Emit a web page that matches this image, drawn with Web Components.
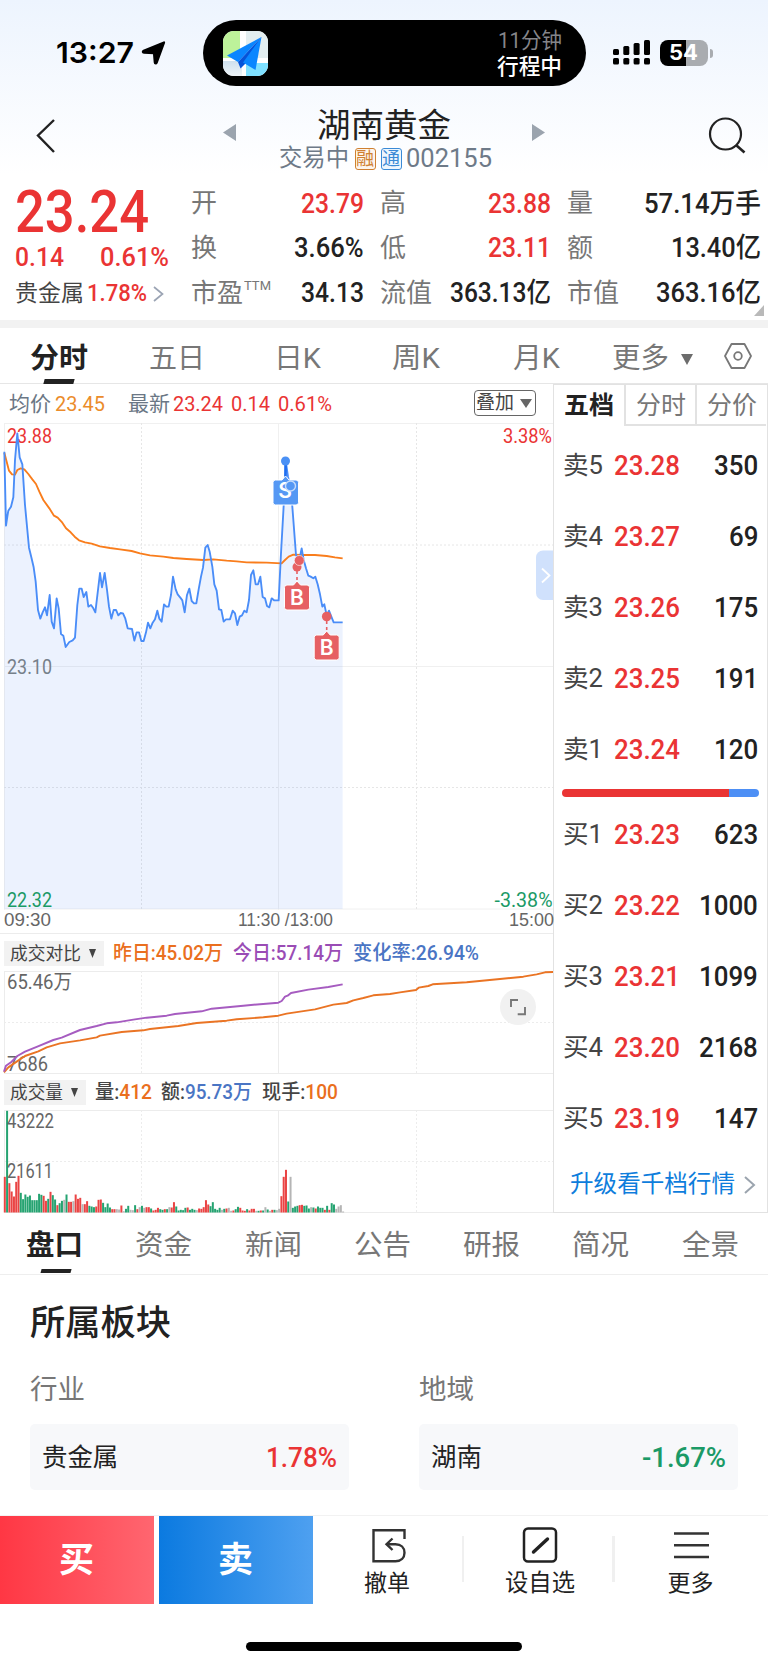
<!DOCTYPE html>
<html lang="zh-CN">
<head>
<meta charset="UTF-8">
<meta name="viewport" content="width=device-width, initial-scale=1.0">
<title>湖南黄金 002155</title>
<style>
  html, body { margin: 0; padding: 0; background: #fff; }
  body {
    width: 768px;
    height: 1665px;
    overflow: hidden;
    font-family: Roboto, "Noto Sans CJK SC", sans-serif;
    color: #222;
    --red: #ea3434;
    --green: #1b9a66;
    --blue: #4d8ff5;
    --line: #ececec;
  }
</style>
</head>
<body>
<stock-app></stock-app>

<script>
class FitText extends HTMLElement {
  constructor() {
    super();
    this.attachShadow({ mode: 'open' });
  }

  connectedCallback() {
    const w = parseFloat(this.getAttribute('w'));
    const s = this.getAttribute('s');
    this.shadowRoot.innerHTML = `
      <style>
        :host {
          display: block;
          flex: none;
          width: ${w}px;
          font-size: ${s}px;
          line-height: 1.2;
          white-space: nowrap;
        }
        span { display: inline-block; transform-origin: 0 50%; vertical-align: top; }
      </style>
      <span><slot></slot></span>
    `;
    const span = this.shadowRoot.querySelector('span');
    const natural = span.getBoundingClientRect().width;
    if (natural) span.style.transform = `scaleX(${w / natural})`;
  }
}

class StatusBar extends HTMLElement {
  constructor() {
    super();
    this.attachShadow({ mode: 'open' });
  }

  connectedCallback() {
    this.shadowRoot.innerHTML = `
      <style>
        :host { display: flex; align-items: center; height: 106px; color: #000; }
        .time { font-family: Inter, sans-serif; font-weight: 600; margin-left: 56px; }
        .arrow { margin-left: 7px; }
        .island {
          display: flex;
          align-items: center;
          width: 383px;
          height: 66px;
          margin-left: 36.500px;
          border-radius: 33px;
          background: #000;
        }
        .island svg { margin-left: 20px; }
        .trip { margin: 1px 24px 0 auto; display: flex; flex-direction: column; align-items: flex-end; }
        .trip .eta { color: #85858a; }
        .trip .state { color: #fff; font-weight: 500; }
        .signal { margin-left: 27px; }
        .battery {
          display: flex;
          align-items: center;
          justify-content: center;
          width: 48px;
          height: 26px;
          margin-left: 10px;
          border-radius: 8px;
          background: linear-gradient(90deg, #000 54%, #a9acb0 54%);
          color: #fff;
          font-family: Inter, sans-serif;
          font-weight: 700;
        }
        .nub { width: 3px; height: 9px; margin-left: 2px; border-radius: 0 4px 4px 0; background: #a9acb0; }
      </style>
      <fit-text class="time" w="78" s="29">13:27</fit-text>
      <svg class="arrow" width="25" height="24" viewBox="0 0 25 24">
        <path d="M23 1.500 15.700 21.500c-.5 1.300-1.800 1.300-1.900 0L13 12.200 3 11.700c-1.500 0-1.500-1.300-.3-1.900z" fill="#000" stroke="#000" stroke-width="2.200" stroke-linejoin="round"/>
      </svg>
      <div class="island">
        <svg width="45" height="45" viewBox="0 0 45 45">
          <defs>
            <clipPath id="c"><rect width="45" height="45" rx="11"/></clipPath>
            <linearGradient id="g" x1="0" y1="0" x2="0" y2="1">
              <stop offset="0" stop-color="#cfe0ee"/><stop offset="1" stop-color="#eef4f8"/>
            </linearGradient>
          </defs>
          <g clip-path="url(#c)">
            <rect width="45" height="45" fill="#fff"/>
            <rect width="17" height="27" fill="#bdf29a"/>
            <rect x="23" width="22" height="27" fill="#e3eef0"/>
            <rect y="30" width="19" height="15" fill="url(#g)"/>
            <rect x="23" y="32" width="22" height="13" fill="#7fe0ff"/>
            <path d="M38.500 6 4 24.500l11 6.500z" fill="#0a86ff"/>
            <path d="M38.500 6 15 31l2.500 6.500L22 33z" fill="#0553d8"/>
            <path d="M38.500 6 20 31.500 32.500 39z" fill="#0a86ff"/>
          </g>
        </svg>
        <div class="trip">
          <fit-text class="eta" w="64" s="21.500">11分钟</fit-text>
          <fit-text class="state" w="65" s="21.500">行程中</fit-text>
        </div>
      </div>
      <svg class="signal" width="37" height="26" viewBox="0 0 37 26">
        <g fill="#000">
          <rect y="9" width="6" height="6" rx="1.500"/><rect x="10.300" y="6" width="6" height="9" rx="1.500"/>
          <rect x="20.600" y="3" width="6" height="12" rx="1.500"/><rect x="31" width="6" height="15" rx="1.500"/>
          <rect y="18" width="6" height="6.500" rx="1.500"/><rect x="10.300" y="18" width="6" height="6.500" rx="1.500"/>
          <rect x="20.600" y="18" width="6" height="6.500" rx="1.500"/><rect x="31" y="18" width="6" height="6.500" rx="1.500"/>
        </g>
      </svg>
      <div class="battery"><fit-text w="29" s="21">54</fit-text></div>
      <div class="nub"></div>
    `;
  }
}

class StockNav extends HTMLElement {
  constructor() {
    super();
    this.attachShadow({ mode: 'open' });
  }

  connectedCallback() {
    this.shadowRoot.innerHTML = `
      <style>
        :host { display: flex; align-items: flex-start; height: 74px; }
        .back { margin: 12px 0 0 35px; }
        .prev { margin: 18px 0 0 167px; }
        .title { width: 216px; margin: 0 40px; display: flex; flex-direction: column; align-items: center; }
        .name { margin-top: -.5px; }
        .sub { display: flex; align-items: center; height: 24px; margin-top: 1.500px; margin-left: 2px; color: #6e7a88; }
        .tag { width: 19px; height: 20px; border: 1.500px solid; border-radius: 3px; display: flex; align-items: center; justify-content: center; }
        .rong { color: #cf8031; background: #fdf5ec; margin-left: 6px; }
        .tong { color: #3a8ad6; background: #eef6fd; margin: 0 4px 0 5px; }
        .next { margin-top: 18px; }
        .search { margin: 11px 0 0 163px; }
      </style>
      <svg class="back" width="21" height="36" viewBox="0 0 21 36"><path d="M19 2 3 17.500 19 34" fill="none" stroke="#222" stroke-width="2.400"/></svg>
      <svg class="prev" width="13" height="17"><path d="M13 0v17L0 8.500z" fill="#9ba4ae"/></svg>
      <div class="title">
        <fit-text class="name" w="134" s="33.500">湖南黄金</fit-text>
        <div class="sub">
          <fit-text w="70" s="23.300">交易中</fit-text>
          <span class="tag rong"><fit-text w="18" s="18">融</fit-text></span>
          <span class="tag tong"><fit-text w="18" s="18">通</fit-text></span>
          <fit-text w="86" s="25">002155</fit-text>
        </div>
      </div>
      <svg class="next" width="13" height="17"><path d="M0 0v17L13 8.500z" fill="#9ba4ae"/></svg>
      <svg class="search" width="38" height="38" viewBox="0 0 38 38">
        <circle cx="17.500" cy="17" r="15.500" fill="none" stroke="#222" stroke-width="2.200"/>
        <path d="m28 28 8.500 7.500" stroke="#222" stroke-width="2.600"/>
      </svg>
    `;
  }
}

class QuotePanel extends HTMLElement {
  constructor() {
    super();
    this.attachShadow({ mode: 'open' });
  }

  connectedCallback() {
    // label, label width, value, value width, colour class
    const columns = [
      [['开', 26, '23.79', 63, 'up'], ['换', 26, '3.66%', 69.5, ''], ['市盈', 52, '34.13', 63, '']],
      [['高', 26, '23.88', 63, 'up'], ['低', 26, '23.11', 63, 'up'], ['流值', 52, '363.13亿', 101, '']],
      [['量', 26, '57.14万手', 117, ''], ['额', 26, '13.40亿', 90, ''], ['市值', 52, '363.16亿', 105, '']]
    ];
    const cell = ([label, lw, value, vw, cls]) => `
      <div class="cell">
        <fit-text class="label" w="${lw}" s="26">${label}</fit-text>
        ${label === '市盈' ? '<fit-text class="ttm" w="27" s="13">TTM</fit-text>' : ''}
        <fit-text class="value ${cls}" w="${vw}" s="27">${value}</fit-text>
      </div>`;
    this.shadowRoot.innerHTML = `
      <style>
        :host { display: flex; position: relative; height: 140px; border-bottom: 8.500px solid #f2f2f2; }
        .up { color: var(--red); }
        .price { width: 191px; box-sizing: border-box; padding: 1px 0 0 15px; color: var(--red); }
        .big { font-weight: 500; line-height: 62px; }
        .row { display: flex; align-items: center; height: 31px; }
        .diff { font-weight: 500; margin-top: -2px; height: 34px; }
        .sector { color: #444; margin-top: 1px; height: 36px; }
        .col { display: flex; flex-direction: column; padding-top: 1.500px; }
        .cell { display: flex; align-items: center; height: 44.700px; }
        .label { color: #777; }
        .ttm { color: #777; margin: -15px 0 0 1px; }
        .value { margin-left: auto; font-weight: 500; }
        .c0 { width: 172.500px; } .c1 { width: 171.500px; margin-left: 16px; } .c2 { width: 194px; margin-left: 15.500px; }
        .corner { position: absolute; right: 4px; bottom: 4px; }
      </style>
      <div class="price">
        <fit-text class="big" w="134" s="59">23.24</fit-text>
        <div class="row diff"><fit-text w="49" s="26">0.14</fit-text><fit-text style="margin-left:36px" w="69" s="26">0.61%</fit-text></div>
        <div class="row sector">
          <fit-text w="69" s="23">贵金属</fit-text>
          <fit-text class="up" style="font-weight:500;margin-left:3px" w="60" s="23">1.78%</fit-text>
          <svg style="margin-left:6px" width="11" height="16"><path d="m1 1 8.500 7L1 15" fill="none" stroke="#9ba4b4" stroke-width="1.700"/></svg>
        </div>
      </div>
      ${columns.map((col, i) => `<div class="col c${i}">${col.map(cell).join('')}</div>`).join('')}
      <svg class="corner" width="10" height="11"><path d="M10 0v11H0z" fill="#b9b9b9"/></svg>
    `;
  }
}

class PeriodTabs extends HTMLElement {
  constructor() {
    super();
    this.attachShadow({ mode: 'open' });
  }

  connectedCallback() {
    this.shadowRoot.innerHTML = `
      <style>
        :host { display: flex; align-items: flex-start; height: 54.500px; border-bottom: 1px solid #e6e6e6; color: #777; }
        fit-text { margin-top: 13.500px; }
        .on { display: flex; flex-direction: column; align-items: center; margin-left: 30px; color: #222; font-weight: 700; }
        .on i { width: 30px; height: 5px; margin-top: 3px; background: #222; transform: skewX(-15deg); }
      </style>
      <div class="on"><fit-text w="58" s="28.500">分时</fit-text><i></i></div>
      <fit-text style="margin-left:61px" w="56" s="28">五日</fit-text>
      <fit-text style="margin-left:69px" w="47" s="28">日K</fit-text>
      <fit-text style="margin-left:71px" w="48" s="28">周K</fit-text>
      <fit-text style="margin-left:73px" w="47" s="28">月K</fit-text>
      <fit-text style="margin-left:52px" w="57" s="28.500">更多</fit-text>
      <svg style="margin:26px 0 0 12px" width="12" height="11"><path d="M0 0h12L6 11z" fill="#6c6c6c"/></svg>
      <svg style="margin:14px 0 0 30px" width="30" height="28" viewBox="0 0 30 28">
        <path d="M8.500 2h13l6.500 12-6.500 12h-13L2 14z" fill="none" stroke="#777" stroke-width="1.800" stroke-linejoin="round"/>
        <circle cx="15" cy="14" r="3.800" fill="none" stroke="#777" stroke-width="1.800"/>
      </svg>
    `;
  }
}

class PriceChart extends HTMLElement {
  constructor() {
    super();
    this.attachShadow({ mode: 'open' });
  }

  connectedCallback() {
    // points are in thirds of a pixel, origin at y = 380
    const price = '13,215 18,437 22,410 25,392 33,380 40,352 45,240 52,160 59,232 67,253 75,375 82,450 87,503 94,532 101,562 107,605 114,690 121,716 128,697 135,682 141,706 149,645 155,725 162,745 170,655 176,685 183,762 190,767 197,801 208,786 218,781 225,773 232,675 238,626 245,626 251,651 259,636 265,680 273,675 280,685 286,697 300,579 306,622 314,579 321,630 327,680 334,716 341,690 348,690 355,706 362,699 369,700 376,716 383,745 396,747 403,782 410,757 417,757 424,783 431,783 438,757 444,728 451,745 458,728 465,718 472,692 478,716 485,725 492,673 499,680 506,680 513,645 519,590 527,628 533,643 541,653 547,661 554,697 561,645 568,626 575,663 582,670 589,670 596,628 603,590 609,563 616,503 623,495 629,515 637,560 643,613 650,632 657,688 664,690 671,725 678,718 690,718 698,692 705,700 712,735 719,710 726,706 733,692 740,697 747,660 753,585 760,571 767,613 774,613 781,590 788,651 795,655 801,678 808,682 815,655 822,661 836,661 843,520 852,360 857,242 864,290 870,317 877,380 888,525 898,540 905,505 911,540 918,565 925,587 932,590 940,595 946,590 953,613 960,643 967,680 973,673 980,706 987,692 994,710 1001,727 1028,727';
    const average = '13,218 20,245 27,272 36,283 45,284 52,270 62,265 73,268 85,282 97,298 108,312 118,335 130,360 148,385 162,407 173,413 187,428 198,445 212,457 224,470 237,481 255,487 275,491 300,499 330,504 360,508 395,513 420,520 450,526 490,530 520,534 560,537 610,540 640,538 680,542 710,544 740,547 800,548 845,550 855,540 866,530 880,524 905,525 945,525 980,528 1005,532 1028,535';
    this.shadowRoot.innerHTML = `
      <style>
        :host { display: block; height: 487px; }
        svg { display: block; overflow: visible; }
        text { font-size: 20px; fill: #76808a; }
        .up { fill: var(--red); }
        .down { fill: var(--green); }
        .mark { font-family: Inter, sans-serif; font-size: 21px; font-weight: 600; fill: #fff; text-anchor: middle; }
      </style>
      <svg width="554" height="487" viewBox="0 423 554 487">
        <g stroke="#f0f0f0" fill="none">
          <path d="M4 423.500h549M4 666.500h549M4 909h549M4.500 423v487M278.500 423v487"/>
          <path d="M4 545h549M4 787.500h549M141.500 423v487M416.500 423v487" stroke="#e6e6e6" stroke-dasharray="2 2"/>
        </g>
        <text class="up" x="7" y="443" textLength="45" lengthAdjust="spacingAndGlyphs">23.88</text>
        <text class="up" x="503" y="443" textLength="49" lengthAdjust="spacingAndGlyphs">3.38%</text>
        <g transform="translate(0 380) scale(.33333)">
          <polygon points="13,1587 ${price} 1028,1587" fill="#4a86f5" fill-opacity=".105"/>
          <polyline points="${average}" fill="none" stroke="#f97d1c" stroke-width="5.600" stroke-linejoin="round"/>
          <polyline points="${price}" fill="none" stroke="#4a8df8" stroke-width="5.600" stroke-linejoin="round"/>
        </g>
        <text x="7" y="674" textLength="45" lengthAdjust="spacingAndGlyphs">23.10</text>
        <text class="down" x="7" y="907" textLength="45" lengthAdjust="spacingAndGlyphs">22.32</text>
        <text class="down" x="494.500" y="907" textLength="58" lengthAdjust="spacingAndGlyphs">-3.38%</text>

        <path d="M285.600 464v16" stroke="#1f6ef0" stroke-width="2.500"/>
        <circle cx="285.500" cy="461" r="4.500" fill="#4a90f5"/>
        <path d="M282 480l3.500-4 3.500 4h7a2.500 2.500 0 0 1 2.500 2.500v20a2.500 2.500 0 0 1-2.500 2.500h-20.500a2.500 2.500 0 0 1-2.500-2.500v-20a2.500 2.500 0 0 1 2.500-2.500z" fill="#5598f4" stroke="#fff" stroke-width="1"/>
        <text class="mark" x="285" y="498">S</text>
        <circle cx="290.500" cy="486" r="5" fill="#5598f4" stroke="#c5dcfb" stroke-width="1.400"/>

        <g fill="#e66063">
          <circle cx="297" cy="567" r="4.500"/>
          <circle cx="299.300" cy="560.500" r="5" stroke="#fff" stroke-width=".6"/>
          <path d="M297 571v13" stroke="#e66063" stroke-width="1.600" stroke-dasharray="3 3"/>
          <path d="M293.500 585l3.500-4 3.500 4h6.500a2.500 2.500 0 0 1 2.500 2.500v20a2.500 2.500 0 0 1-2.500 2.500h-20a2.500 2.500 0 0 1-2.500-2.500v-20a2.500 2.500 0 0 1 2.500-2.500z" stroke="#fff" stroke-width="1"/>
          <circle cx="326.700" cy="616.500" r="4.800"/>
          <path d="M326.700 621v13" stroke="#e66063" stroke-width="1.600" stroke-dasharray="3 3"/>
          <path d="M323.200 635l3.500-4 3.500 4h6.500a2.500 2.500 0 0 1 2.500 2.500v20a2.500 2.500 0 0 1-2.500 2.500h-20a2.500 2.500 0 0 1-2.500-2.500v-20a2.500 2.500 0 0 1 2.500-2.500z" stroke="#fff" stroke-width="1"/>
        </g>
        <text class="mark" x="297" y="604.500">B</text>
        <text class="mark" x="326.700" y="654.500">B</text>

        <path d="M554 550.500h-11a7 7 0 0 0-7 7v35.500a7 7 0 0 0 7 7h11z" fill="#d0e1fc"/>
        <path d="m542 568.500 7.500 7-7.500 7" fill="none" stroke="#fff" stroke-width="1.800"/>
      </svg>
    `;
  }
}

class CompareChart extends HTMLElement {
  constructor() {
    super();
    this.attachShadow({ mode: 'open' });
  }

  connectedCallback() {
    // thirds of a pixel, origin at y = 880
    const today = '12,575 18,557 35,545 52,528 75,515 112,500 160,480 185,473 240,450 290,438 320,430 350,427 400,419 440,413 500,407 525,402 605,394 635,386 730,377 835,368 845,363 855,350 863,347 873,339 925,329 985,321 1028,313';
    const yesterday = '12,577 25,562 50,545 75,528 115,514 140,502 180,490 240,481 290,472 300,467 365,456 430,451 450,447 535,438 590,429 680,422 710,418 790,412 835,407 860,401 945,388 1000,374 1040,369 1060,361 1090,354 1120,346 1170,342 1200,337 1248,330 1256,323 1285,318 1298,313 1400,307 1500,297 1570,290 1610,283 1635,277 1660,276';
    this.shadowRoot.innerHTML = `
      <style>
        :host { display: block; height: 103px; }
        svg { display: block; overflow: visible; }
        text { font-size: 20px; fill: #666; }
      </style>
      <svg width="554" height="103" viewBox="0 971 554 103">
        <g stroke="#ececec" fill="none">
          <path d="M4 971.500h549M4 1073.500h549M4.500 971v103M278.500 971v103"/>
          <path d="M4 1022.500h549M141.500 971v103M416.500 971v103" stroke-dasharray="2 2"/>
        </g>
        <text x="7" y="989" textLength="65" lengthAdjust="spacingAndGlyphs">65.46万</text>
        <text x="7" y="1071" textLength="41" lengthAdjust="spacingAndGlyphs">7686</text>
        <g transform="translate(0 880) scale(.33333)" fill="none" stroke-width="5.800" stroke-linejoin="round">
          <polyline points="${yesterday}" stroke="#ea7424"/>
          <polyline points="${today}" stroke="#a65cc0"/>
        </g>
        <circle cx="518" cy="1007" r="18" fill="#f1f1f1"/>
        <path d="M511 1007v-7h7M525 1007v7.300h-7.300" fill="none" stroke="#777" stroke-width="1.900"/>
      </svg>
    `;
  }
}

class VolumeChart extends HTMLElement {
  constructor() {
    super();
    this.attachShadow({ mode: 'open' });
  }

  connectedCallback() {
    // r = up, g = down, x = flat, followed by the bar height
    const bars = 'r107 g305 r88 r63 r48 r92 r110 g59 g40 g54 g47 g51 g37 g37 g37 g56 g53 r50 r35 g41 r62 g52 g39 r22 g28 g35 x38 g54 r32 r32 x34 r54 r41 r44 x25 r25 r34 g20 g18 g16 r18 r38 r39 g29 g16 g27 g15 r10 r10 x10 x9 r21 x4 g11 g20 x8 x7 g22 r10 x16 g20 x14 r16 r16 g12 r6 r8 r14 g10 g8 r10 g10 x16 r15 r31 g18 g6 g8 g7 g14 r15 g8 g11 g8 x7 r12 r11 r16 r37 r24 g19 g31 g11 g8 g14 x8 g11 r12 x14 x5 r6 g10 g17 r14 r6 r5 g10 r6 r11 r11 x5 g5 r6 g6 x16 g9 x5 r8 g8 x7 x11 r49 r107 r128 g33 x107 g14 g18 g20 r22 r23 g20 g21 g12 x16 g15 r12 g18 g14 g14 r8 g20 r8 g28 g24 x11 x18 x22 x3'.split(' ');
    const colors = { r: '#ea4444', g: '#25a371', x: '#b5b5b5' };
    const rects = bars.map((b, i) => {
      const h = b.slice(1) / 3;
      return `<rect x="${(3.8 + i * 2.286).toFixed(2)}" y="${(1212.5 - h).toFixed(2)}" width="2" height="${h.toFixed(2)}" fill="${colors[b[0]]}"/>`;
    }).join('');
    this.shadowRoot.innerHTML = `
      <style>
        :host { display: block; height: 103px; }
        svg { display: block; overflow: visible; }
        text { font-size: 19.500px; fill: #666; }
      </style>
      <svg width="554" height="103" viewBox="0 1110 554 103">
        <g stroke="#ececec" fill="none">
          <path d="M4 1110.500h549M4 1212.500h549M4.500 1110v103M278.500 1110v103"/>
          <path d="M4 1161.500h549M141.500 1110v103M416.500 1110v103" stroke-dasharray="2 2"/>
        </g>
        ${rects}
        <text x="7" y="1127.500" textLength="47" lengthAdjust="spacingAndGlyphs">43222</text>
        <text x="7" y="1177.500" textLength="46" lengthAdjust="spacingAndGlyphs">21611</text>
      </svg>
    `;
  }
}

class ChartPanel extends HTMLElement {
  constructor() {
    super();
    this.attachShadow({ mode: 'open' });
  }

  connectedCallback() {
    this.shadowRoot.innerHTML = `
      <style>
        :host { display: block; width: 553px; }
        .bar { display: flex; align-items: center; box-sizing: border-box; }
        .legend { height: 39px; padding-top: 3px; color: var(--red); }
        .grey { color: #6b7785; }
        .overlay {
          display: flex;
          align-items: center;
          width: 60px;
          height: 24px;
          margin: -3px 0 0 141.500px;
          border: 1.500px solid #666;
          border-radius: 4px;
          color: #444;
        }
        .times { height: 23px; padding: 0 0 1px 4px; color: #666; font-family: "Liberation Sans", sans-serif; }
        .compare { height: 38px; padding-top: 2px; border-top: 1px solid #ececec; font-weight: 500; }
        .volume { height: 36px; padding-top: 1px; font-weight: 500; color: #444; }
        .pill {
          display: flex;
          align-items: center;
          justify-content: space-between;
          box-sizing: border-box;
          height: 25px;
          margin-left: 4px;
          padding: 1px 8px 0 6px;
          background: #f2f2f2;
          color: #444;
          font-weight: 400;
        }
        .orange { color: #ea6f1e; } .violet { color: #9a4cb5; } .blue { color: #4a75c4; }
      </style>
      <div class="bar legend">
        <fit-text class="grey" style="margin-left:9px" w="42" s="21">均价</fit-text>
        <fit-text style="margin-left:4px;color:#eb8c2b" w="50" s="20.500">23.45</fit-text>
        <fit-text class="grey" style="margin-left:23px" w="42" s="21">最新</fit-text>
        <fit-text style="margin-left:3px" w="50" s="20.500">23.24</fit-text>
        <fit-text style="margin-left:8px" w="39" s="20.500">0.14</fit-text>
        <fit-text style="margin-left:8px" w="54" s="20.500">0.61%</fit-text>
        <div class="overlay">
          <fit-text style="margin-left:1px;padding-top:1px" w="38" s="19">叠加</fit-text>
          <svg style="margin-left:6px" width="12" height="9"><path d="M0 0h12L6 9z" fill="#666"/></svg>
        </div>
      </div>
      <price-chart></price-chart>
      <div class="bar times">
        <fit-text w="47" s="19">09:30</fit-text>
        <fit-text style="margin-left:187px" w="95" s="19">11:30 /13:00</fit-text>
        <fit-text style="margin-left:176px" w="45" s="19">15:00</fit-text>
      </div>
      <div class="bar compare">
        <div class="pill" style="width:100px"><fit-text w="71" s="17.800">成交对比</fit-text><svg width="7" height="9"><path d="M0 0h7L3.500 9z" fill="#444"/></svg></div>
        <fit-text class="orange" style="margin-left:9px" w="110" s="20">昨日:45.02万</fit-text>
        <fit-text class="violet" style="margin-left:10px" w="110" s="20">今日:57.14万</fit-text>
        <fit-text class="blue" style="margin-left:10px" w="126" s="20">变化率:26.94%</fit-text>
      </div>
      <compare-chart></compare-chart>
      <div class="bar volume">
        <div class="pill" style="width:82px"><fit-text w="53" s="17.800">成交量</fit-text><svg width="7" height="9"><path d="M0 0h7L3.500 9z" fill="#444"/></svg></div>
        <fit-text style="margin-left:9px" w="57" s="20">量:<span style="color:#ea6f1e">412</span></fit-text>
        <fit-text style="margin-left:9px" w="91" s="20">额:<span style="color:#4a75c4">95.73万</span></fit-text>
        <fit-text style="margin-left:10px" w="76" s="20">现手:<span style="color:#ea6f1e">100</span></fit-text>
      </div>
      <volume-chart></volume-chart>
    `;
  }
}

class OrderBook extends HTMLElement {
  constructor() {
    super();
    this.attachShadow({ mode: 'open' });
  }

  connectedCallback() {
    const sells = [['卖5', '23.28', '350'], ['卖4', '23.27', '69'], ['卖3', '23.26', '175'], ['卖2', '23.25', '191'], ['卖1', '23.24', '120']];
    const buys = [['买1', '23.23', '623'], ['买2', '23.22', '1000'], ['买3', '23.21', '1099'], ['买4', '23.20', '2168'], ['买5', '23.19', '147']];
    const level = ([name, price, qty]) => `
      <div class="level">
        <fit-text w="40" s="25">${name}</fit-text>
        <fit-text class="price" w="66" s="28">${price}</fit-text>
        <fit-text class="qty" w="${qty.length * 14.7}" s="28">${qty}</fit-text>
      </div>`;
    this.shadowRoot.innerHTML = `
      <style>
        :host {
          display: block;
          box-sizing: border-box;
          width: 215px;
          height: 829px;
          border: 1px solid #e2e2e2;
        }
        .tabs { display: flex; height: 46px; align-items: flex-start; color: #777; }
        .tab { display: flex; align-items: center; justify-content: center; box-sizing: border-box; height: 41px; width: 71px; padding-top: 4px; border-left: 2px solid #e2e2e2; border-bottom: 2px solid #e2e2e2; }
        .tab.on { color: #222; font-weight: 700; border: 0; width: 70px; padding-bottom: 2px; }
        .level { display: flex; align-items: center; height: 71px; padding: 0 9px 0 9px; color: #444; }
        .price { margin-left: 11px; color: var(--red); font-weight: 500; }
        .qty { margin-left: auto; color: #222; font-weight: 500; }
        .ratio { height: 8px; margin: 3px 8px; border-radius: 4px; background: linear-gradient(90deg, var(--red) 84.700%, var(--blue) 84.700%); }
        .more { display: flex; align-items: center; height: 60px; padding-left: 16px; color: #0e7ddc; }
      </style>
      <div class="tabs">
        <div class="tab on"><fit-text w="50" s="25">五档</fit-text></div>
        <div class="tab"><fit-text w="50" s="25">分时</fit-text></div>
        <div class="tab"><fit-text w="50" s="25">分价</fit-text></div>
      </div>
      ${sells.map(level).join('')}
      <div class="ratio"></div>
      ${buys.map(level).join('')}
      <div class="more">
        <fit-text w="165" s="23.600">升级看千档行情</fit-text>
        <svg style="margin-left:9px" width="12" height="18"><path d="m1 1 9 8-9 8" fill="none" stroke="#9ba4ae" stroke-width="2"/></svg>
      </div>
    `;
  }
}

class InfoTabs extends HTMLElement {
  constructor() {
    super();
    this.attachShadow({ mode: 'open' });
  }

  connectedCallback() {
    const tabs = ['盘口', '资金', '新闻', '公告', '研报', '简况', '全景'];
    this.shadowRoot.innerHTML = `
      <style>
        :host { display: flex; height: 61px; border-bottom: 1px solid #eee; color: #777; }
        .tab { width: 109.700px; display: flex; flex-direction: column; align-items: center; padding-top: 16.500px; margin-left: -.4px; box-sizing: border-box; }
        .tab.on { color: #222; font-weight: 700; }
        .on i { width: 30px; height: 5px; margin-top: 6px; margin-left: 3px; background: #222; transform: skewX(-15deg); }
      </style>
      ${tabs.map((t, i) => `<div class="tab${i ? '' : ' on'}"><fit-text w="57" s="28.500">${t}</fit-text>${i ? '' : '<i></i>'}</div>`).join('')}
    `;
  }
}

class SectorCard extends HTMLElement {
  constructor() {
    super();
    this.attachShadow({ mode: 'open' });
  }

  connectedCallback() {
    const name = this.getAttribute('name') || '';
    const change = this.getAttribute('change') || '';
    const down = change.startsWith('-');
    this.shadowRoot.innerHTML = `
      <style>
        :host { display: block; width: 319px; }
        .kind { color: #777; }
        .box {
          display: flex;
          align-items: center;
          justify-content: space-between;
          box-sizing: border-box;
          height: 66px;
          margin-top: 17.500px;
          padding: 1px 12px 0 12px;
          border-radius: 5px;
          background: #f7f8fa;
        }
        .change { color: var(${down ? '--green' : '--red'}); font-weight: 500; }
      </style>
      <fit-text class="kind" w="55" s="27.500"><slot></slot></fit-text>
      <div class="box">
        <fit-text w="${name.length * 25.4}" s="25.500">${name}</fit-text>
        <fit-text class="change" w="${down ? 84 : 71}" s="27.500">${change}</fit-text>
      </div>
    `;
  }
}

class ActionBar extends HTMLElement {
  constructor() {
    super();
    this.attachShadow({ mode: 'open' });
  }

  connectedCallback() {
    this.shadowRoot.innerHTML = `
      <style>
        :host { display: flex; height: 88px; border-top: 1px solid #f2f2f2; margin-top: auto; }
        .trade { display: flex; align-items: center; justify-content: center; box-sizing: border-box; width: 153.500px; padding-top: 2px; color: #fff; font-weight: 700; }
        .buy { background: linear-gradient(90deg, #ff3744, #ff6670); }
        .sell { margin-left: 5.500px; background: linear-gradient(90deg, #0b7ae0, #4ea0f0); }
        .item { display: flex; flex-direction: column; align-items: center; box-sizing: border-box; padding-top: 11px; }
        .item fit-text { margin-top: 7px; }
        .rule { width: 2.500px; height: 46px; margin-top: 20px; background: #f0f0f0; }
      </style>
      <div class="trade buy"><fit-text w="35" s="35">买</fit-text></div>
      <div class="trade sell"><fit-text w="35" s="35">卖</fit-text></div>
      <div class="item" style="width:149px">
        <svg style="margin-left:3px" width="36" height="36" viewBox="0 0 36 36" fill="none" stroke="#333" stroke-width="2.400">
          <path d="M33.500 12V3.200H2.500v31h22c5.500 0 9-3.500 9-8.500s-3.500-8.500-9-8.500h-8"/>
          <path d="m21.500 11.500-6 5.700 6 5.800"/>
        </svg>
        <fit-text w="46" s="23">撤单</fit-text>
      </div>
      <div class="rule"></div>
      <div class="item" style="width:148px;padding-left:3px">
        <svg width="36" height="36" viewBox="0 0 36 36">
          <rect x="2" y="1.500" width="32" height="33" rx="4" fill="none" stroke="#222" stroke-width="2.500"/>
          <path d="M11.500 25 25.500 12" stroke="#222" stroke-width="3.400" stroke-linecap="round"/>
        </svg>
        <fit-text w="70" s="23.300">设自选</fit-text>
      </div>
      <div class="rule"></div>
      <div class="item" style="width:152px">
        <svg style="margin-left:1px" width="35" height="36" viewBox="0 0 35 36"><path d="M0 6.500h35M0 18.200h35M0 30h35" stroke="#333" stroke-width="2.400"/></svg>
        <fit-text w="46" s="23">更多</fit-text>
      </div>
    `;
  }
}

class StockApp extends HTMLElement {
  constructor() {
    super();
    this.attachShadow({ mode: 'open' });
  }

  connectedCallback() {
    this.shadowRoot.innerHTML = `
      <style>
        :host {
          display: flex;
          flex-direction: column;
          width: 768px;
          height: 1665px;
          background: linear-gradient(180deg, #edf4fe 0, #fff 175px);
        }
        .market { display: flex; }
        .sectors { padding: 27px 30px 0; }
        .cards { display: flex; justify-content: space-between; margin-top: 29.500px; }
        .home { height: 61px; display: flex; align-items: flex-start; justify-content: center; }
        .home i { width: 276px; height: 9px; margin-top: 37.500px; border-radius: 5px; background: #000; }
      </style>
      <status-bar></status-bar>
      <stock-nav></stock-nav>
      <quote-panel></quote-panel>
      <period-tabs></period-tabs>
      <div class="market">
        <chart-panel></chart-panel>
        <order-book></order-book>
      </div>
      <info-tabs></info-tabs>
      <div class="sectors">
        <fit-text style="font-weight:500" w="141" s="35.300">所属板块</fit-text>
        <div class="cards">
          <sector-card name="贵金属" change="1.78%">行业</sector-card>
          <sector-card name="湖南" change="-1.67%">地域</sector-card>
        </div>
      </div>
      <action-bar></action-bar>
      <div class="home"><i></i></div>
    `;
  }
}

customElements.define('fit-text', FitText);
customElements.define('status-bar', StatusBar);
customElements.define('stock-nav', StockNav);
customElements.define('quote-panel', QuotePanel);
customElements.define('period-tabs', PeriodTabs);
customElements.define('price-chart', PriceChart);
customElements.define('compare-chart', CompareChart);
customElements.define('volume-chart', VolumeChart);
customElements.define('chart-panel', ChartPanel);
customElements.define('order-book', OrderBook);
customElements.define('info-tabs', InfoTabs);
customElements.define('sector-card', SectorCard);
customElements.define('action-bar', ActionBar);
customElements.define('stock-app', StockApp);
</script>
</body>
</html>
